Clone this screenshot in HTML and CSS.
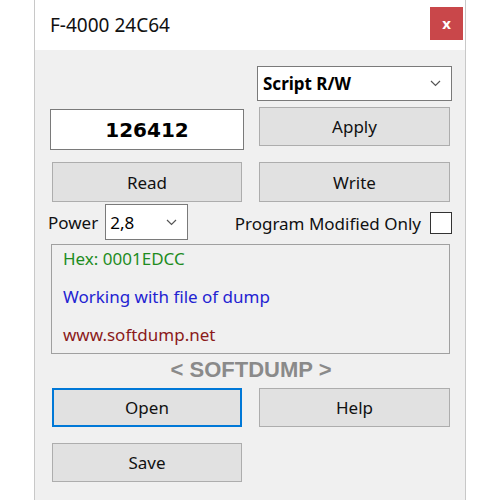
FILE: index.html
```html
<!DOCTYPE html>
<html lang="en">
<head>
  <meta charset="UTF-8" />
  <title>F-4000 24C64</title>
  <link rel="stylesheet" href="styles.css">
</head>
<body>
  <div class="window">
    <div class="titlebar">
      <span class="title">F-4000 24C64</span>
      <span class="close">x</span>
    </div>

    <div class="content">
      <div class="row row-top">
        <div class="select script">
          <span>Script R/W</span>
          <svg class="chev" width="11" height="7" viewBox="0 0 11 7"><path d="M1 1 L5.5 5.5 L10 1" fill="none" stroke="#555" stroke-width="1.2"/></svg>
        </div>
      </div>

      <div class="row row-value">
        <div class="textbox">126412</div>
        <button class="btn apply">Apply</button>
      </div>

      <div class="row row-rw">
        <button class="btn">Read</button>
        <button class="btn">Write</button>
      </div>

      <div class="row row-power">
        <div class="power">
          <span class="label">Power</span>
          <div class="select small">
            <span>2,8</span>
            <svg class="chev" width="11" height="7" viewBox="0 0 11 7"><path d="M1 1 L5.5 5.5 L10 1" fill="none" stroke="#555" stroke-width="1.2"/></svg>
          </div>
        </div>
        <div class="check">
          <span class="label">Program Modified Only</span>
          <span class="box"></span>
        </div>
      </div>

      <div class="info">
        <div class="line hex">Hex: 0001EDCC</div>
        <div class="line work">Working with file of dump</div>
        <div class="line site">www.softdump.net</div>
      </div>

      <div class="brand">&lt; SOFTDUMP &gt;</div>

      <div class="row row-open">
        <button class="btn focus">Open</button>
        <button class="btn">Help</button>
      </div>

      <div class="row row-save">
        <button class="btn">Save</button>
      </div>
    </div>
  </div>
</body>
</html>
```

FILE: styles.css
```css
body {
  margin: 0;
  background: white;
  font-family: "Noto Sans", "Open Sans", sans-serif;
  color: #000;
}

.window {
  margin-left: 34px;
  width: 430px;
  height: 500px;
  border-left: 1px solid #c8c8c8;
  border-right: 1px solid #c8c8c8;
  background: #f0f0f0;
}

.titlebar {
  height: 50px;
  background: white;
  display: flex;
  align-items: center;
  justify-content: space-between;
  padding-left: 15px;
  padding-right: 2px;
}

.title {
  font-size: 19px;
  color: #111;
}

.close {
  width: 33px;
  height: 33px;
  background: #c9474a;
  color: white;
  font-weight: bold;
  font-size: 15px;
  display: flex;
  align-items: center;
  justify-content: center;
  margin-top: -4px;
}

.content {
  padding: 16px 13px 0 15px;
}

.row {
  display: grid;
  grid-template-columns: 194px 195px;
  column-gap: 13px;
}

.row-top .script {
  grid-column: 2;
}

.select {
  height: 35px;
  box-sizing: border-box;
  border: 1px solid #7a7a7a;
  background: white;
  display: flex;
  align-items: center;
  justify-content: space-between;
  padding: 0 10px 0 5px;
  font-size: 17px;
}

.script span {
  font-weight: bold;
}

.row-value {
  margin-top: 6px;
  height: 43px;
}

.textbox {
  margin-top: 2px;
  height: 41px;
  box-sizing: border-box;
  border: 1px solid #7a7a7a;
  background: white;
  display: flex;
  align-items: center;
  justify-content: center;
  font-family: "DejaVu Sans", sans-serif;
  font-weight: bold;
  font-size: 20px;
}

.btn {
  margin: 0 2px;
  height: 39px;
  background: #e1e1e1;
  border: 1px solid #adadad;
  font-family: "Noto Sans", "Open Sans", sans-serif;
  font-size: 17px;
  color: #111;
  padding: 0;
}

.row-rw {
  margin-top: 12px;
}

.row-rw .btn {
  height: 40px;
}

.row-power {
  margin-top: 2px;
  height: 36px;
  display: flex;
  justify-content: space-between;
  align-items: center;
}

.power {
  display: flex;
  align-items: center;
  margin-left: -2px;
}

.label {
  font-size: 17px;
  color: #111;
}

.select.small {
  width: 83px;
  height: 36px;
  margin-left: 7px;
  padding-left: 4px;
}

.check {
  display: flex;
  align-items: center;
  padding-top: 2px;
}

.box {
  width: 22px;
  height: 22px;
  box-sizing: border-box;
  border: 1px solid #333;
  background: white;
  margin-left: 9px;
}

.info {
  margin-top: 4px;
  margin-left: 1px;
  width: 399px;
  height: 110px;
  box-sizing: border-box;
  border: 1px solid #a0a0a0;
  padding: 2px 11px;
  font-size: 17px;
}

.line {
  height: 38px;
  line-height: 24px;
}

.hex { color: #1e8c1e; }
.work { color: #2323d2; }
.site { color: #8b1a1a; }

.brand {
  margin-top: 6px;
  height: 20px;
  line-height: 20px;
  text-align: center;
  font-family: "Liberation Sans", Arial, sans-serif;
  font-weight: bold;
  font-size: 22px;
  color: #8a8a8a;
}

.row-open {
  margin-top: 8px;
}

.btn.focus {
  border: 2px solid #0078d7;
}

.row-save {
  margin-top: 16px;
}
```
